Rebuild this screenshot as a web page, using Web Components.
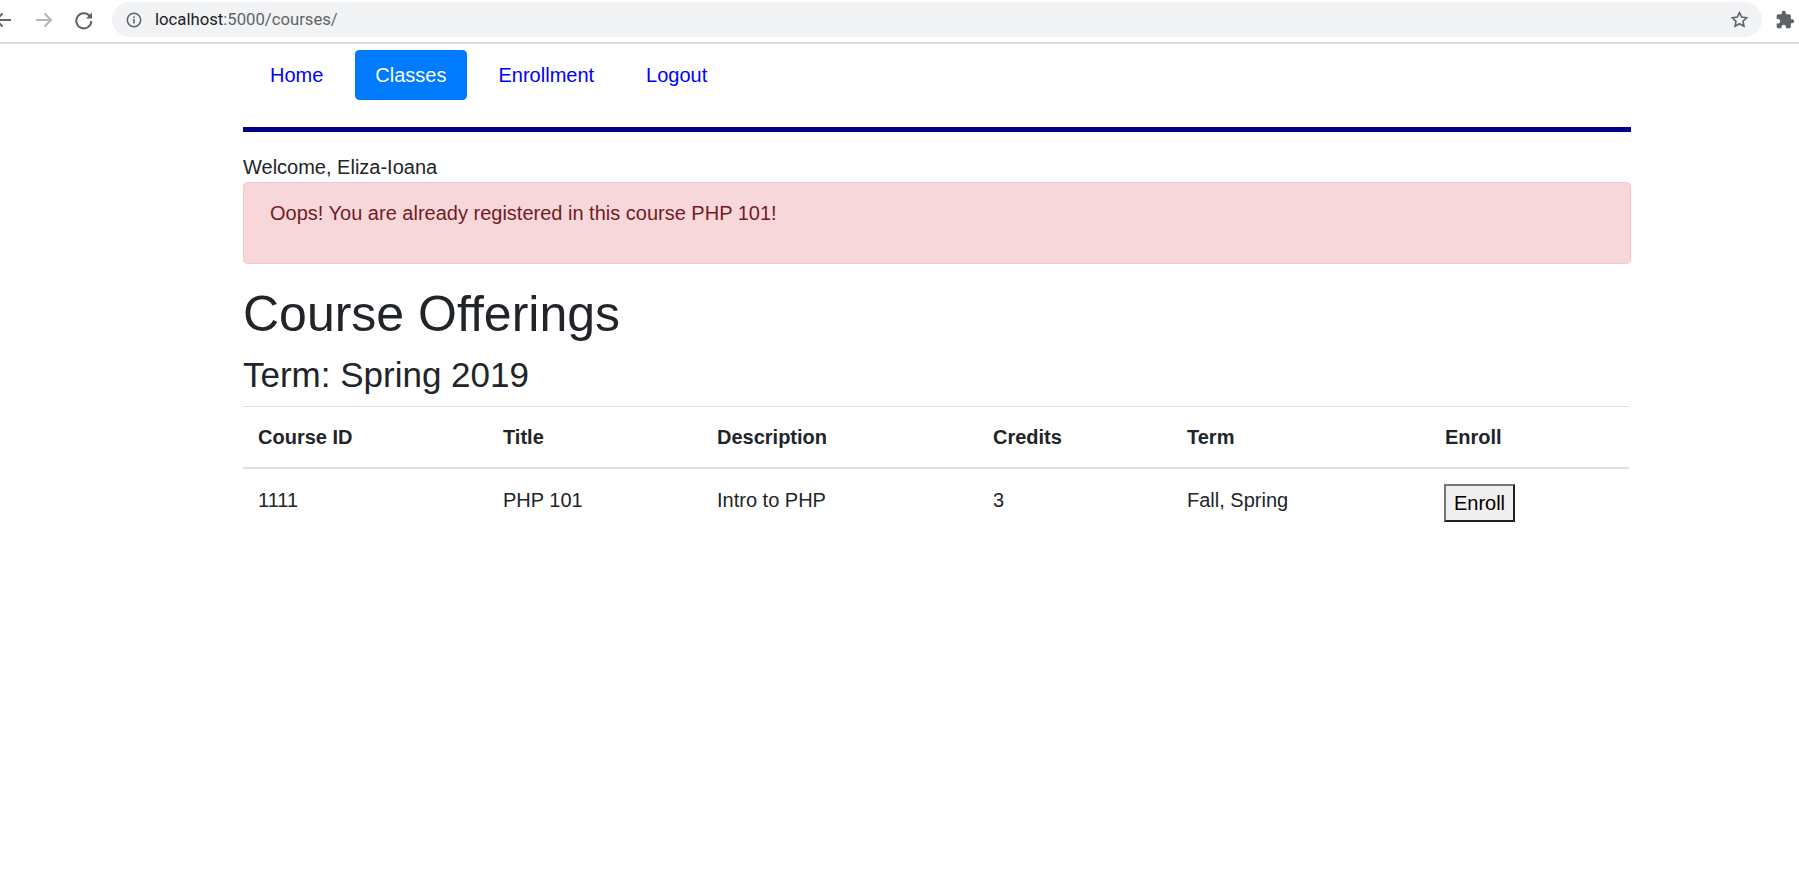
<!DOCTYPE html>
<html>
<head>
<meta charset="utf-8">
<title>Courses</title>
<style>
html, body { margin: 0; padding: 0; background: #fff; }
body { font-family: "Liberation Sans", Arial, sans-serif; font-size: 20px; color: #212529; overflow: hidden; }
</style>
</head>
<body>
<browser-bar url-host="localhost" url-path=":5000/courses/"></browser-bar>
<page-content>
    <site-nav>
        <nav-link>Home</nav-link>
        <nav-link active>Classes</nav-link>
        <nav-link>Enrollment</nav-link>
        <nav-link>Logout</nav-link>
    </site-nav>
    <welcome-line>Welcome, Eliza-Ioana</welcome-line>
    <alert-box>Oops! You are already registered in this course PHP 101!</alert-box>
    <page-title term="Term: Spring 2019">Course Offerings</page-title>
    <course-table></course-table>
</page-content>
<script>
class BrowserBar extends HTMLElement {
    connectedCallback() {
        this.attachShadow({ mode: 'open' });
        this.shadowRoot.innerHTML = `
            <style>
                :host {
                    display: flex;
                    align-items: center;
                    height: 42px;
                    border-bottom: 2px solid #dcdce0;
                    background: #fff;
                    overflow: hidden;
                }
                .nav { display: flex; align-items: center; width: 112px; flex: none; margin-top: -3px; }
                .nav svg { flex: none; display: block; }
                .back { margin-left: -9px; }
                .forward { margin-left: 17px; }
                .reload { margin-left: 16px; }
                .omni {
                    flex: none;
                    width: 1650px;
                    height: 35px;
                    margin-top: -3px;
                    box-sizing: border-box;
                    padding: 0 13px 0 14px;
                    background: #f1f3f4;
                    border-radius: 18px;
                    display: flex;
                    align-items: center;
                    font-family: "Roboto", "Liberation Sans", sans-serif;
                    font-size: 16.700px;
                }
                .host { color: #202124; margin-left: 13px; }
                .path { color: #5f6368; }
                .spacer { flex: 1; }
                .puzzle { flex: none; margin-left: 13px; margin-top: -3px; }
            </style>
            <div class="nav">
                <svg class="back" width="24" height="24" viewBox="0 0 24 24" fill="none" stroke="#5f6368" stroke-width="2"><path d="M20 12H5M11.500 5.500 5 12l6.500 6.500"/></svg>
                <svg class="forward" width="24" height="24" viewBox="0 0 24 24" fill="none" stroke="#b4b6b9" stroke-width="2"><path d="M4 12h15M12.500 5.500 19 12l-6.500 6.500"/></svg>
                <svg class="reload" width="24" height="24" viewBox="0 0 24 24" fill="none"><path d="M17.700 8.200A7.500 7.500 0 1 0 19.300 13" stroke="#5f6368" stroke-width="2"/><path d="M20 4.500V10.500H14z" fill="#5f6368"/></svg>
            </div>
            <div class="omni">
                <svg width="16" height="16" viewBox="0 0 16 16"><circle cx="8" cy="8" r="6.700" fill="none" stroke="#5f6368" stroke-width="1.500"/><rect x="7.200" y="7" width="1.600" height="4.500" fill="#5f6368"/><rect x="7.200" y="4.400" width="1.600" height="1.600" fill="#5f6368"/></svg>
                <span class="host">${this.getAttribute('url-host')}</span><span class="path">${this.getAttribute('url-path')}</span>
                <span class="spacer"></span>
                <svg width="19" height="19" viewBox="0 0 24 24" fill="none" stroke="#5f6368" stroke-width="2"><path d="M12 3.200l2.700 5.800 6.300.8-4.600 4.300 1.200 6.300L12 17.300l-5.600 3.100 1.200-6.300L3 9.800l6.300-.8z"/></svg>
            </div>
            <svg class="puzzle" width="20" height="20" viewBox="0 0 24 24" fill="#5f6368"><path d="M20.500 11H19V7a2 2 0 0 0-2-2h-4V3.500a2.500 2.500 0 0 0-5 0V5H4a2 2 0 0 0-2 2v3.800h1.500a2.700 2.700 0 0 1 0 5.400H2V20a2 2 0 0 0 2 2h3.800v-1.500a2.700 2.700 0 0 1 5.400 0V22H17a2 2 0 0 0 2-2v-4h1.500a2.500 2.500 0 0 0 0-5z"/></svg>
        `;
    }
}

class PageContent extends HTMLElement {
    connectedCallback() {
        this.attachShadow({ mode: 'open' });
        this.shadowRoot.innerHTML = `
            <style>
                :host {
                    display: block;
                    width: 1388px;
                    margin-left: 243px;
                }
            </style>
            <slot></slot>
        `;
    }
}

class SiteNav extends HTMLElement {
    connectedCallback() {
        this.attachShadow({ mode: 'open' });
        this.shadowRoot.innerHTML = `
            <style>
                :host {
                    display: flex;
                    gap: 12px;
                    height: 77px;
                    padding: 6px 0 0 7px;
                    border-bottom: 5px solid #00008b;
                    align-items: flex-start;
                }
            </style>
            <slot></slot>
        `;
    }
}

class NavLink extends HTMLElement {
    connectedCallback() {
        this.attachShadow({ mode: 'open' });
        this.shadowRoot.innerHTML = `
            <style>
                :host {
                    display: block;
                    height: 50px;
                    line-height: 50px;
                    padding: 0 20px;
                    border-radius: 4.500px;
                    color: #0000ff;
                    white-space: nowrap;
                }
                :host([active]) {
                    background: #007bff;
                    color: #fff;
                }
            </style>
            <slot></slot>
        `;
    }
}

class WelcomeLine extends HTMLElement {
    connectedCallback() {
        this.attachShadow({ mode: 'open' });
        this.shadowRoot.innerHTML = `
            <style>
                :host { display: block; padding-top: 21px; height: 29px; line-height: 28px; }
            </style>
            <slot></slot>
        `;
    }
}

class AlertBox extends HTMLElement {
    connectedCallback() {
        this.attachShadow({ mode: 'open' });
        this.shadowRoot.innerHTML = `
            <style>
                :host {
                    display: block;
                    box-sizing: border-box;
                    height: 82px;
                    padding: 16px 26px;
                    line-height: 28px;
                    background: #f8d7da;
                    border: 1px solid #f5c6cb;
                    border-radius: 4.500px;
                    color: #721c24;
                }
            </style>
            <slot></slot>
        `;
    }
}

class PageTitle extends HTMLElement {
    connectedCallback() {
        this.attachShadow({ mode: 'open' });
        this.shadowRoot.innerHTML = `
            <style>
                :host { display: block; padding-top: 20px; }
                h1, h2 { margin: 0; font-weight: 400; color: #212529; }
                h1 { font-size: 50px; line-height: 60px; }
                h2 { font-size: 35px; line-height: 44px; margin-top: 9px; }
            </style>
            <h1><slot></slot></h1>
            <h2>${this.getAttribute('term')}</h2>
        `;
    }
}

class CourseTable extends HTMLElement {
    connectedCallback() {
        const heads = ['Course ID', 'Title', 'Description', 'Credits', 'Term', 'Enroll'];
        const row = ['1111', 'PHP 101', 'Intro to PHP', '3', 'Fall, Spring'];
        this.attachShadow({ mode: 'open' });
        this.shadowRoot.innerHTML = `
            <style>
                :host { display: block; width: 1386px; margin-top: 9px; }
                .row {
                    display: grid;
                    grid-template-columns: 245px 214px 276px 194px 258px 199px;
                    align-items: center;
                }
                .head {
                    height: 60px;
                    border-top: 1px solid #dee2e6;
                    border-bottom: 2px solid #dee2e6;
                    font-weight: 700;
                }
                .body { height: 62px; }
                .row > div { padding-left: 15px; }
                button {
                    font: inherit;
                    color: #000;
                    height: 38px;
                    width: 71px;
                    padding: 0;
                    margin-top: 6px;
                    background: #efefef;
                    border: 2px solid;
                    border-color: #767676 #212121 #212121 #767676;
                    display: block;
                    margin-left: -1px;
                }
            </style>
            <div class="row head">${heads.map(h => `<div>${h}</div>`).join('')}</div>
            <div class="row body">${row.map(c => `<div>${c}</div>`).join('')}<div><button>Enroll</button></div></div>
        `;
    }
}

customElements.define('browser-bar', BrowserBar);
customElements.define('page-content', PageContent);
customElements.define('site-nav', SiteNav);
customElements.define('nav-link', NavLink);
customElements.define('welcome-line', WelcomeLine);
customElements.define('alert-box', AlertBox);
customElements.define('page-title', PageTitle);
customElements.define('course-table', CourseTable);
</script>
</body>
</html>
